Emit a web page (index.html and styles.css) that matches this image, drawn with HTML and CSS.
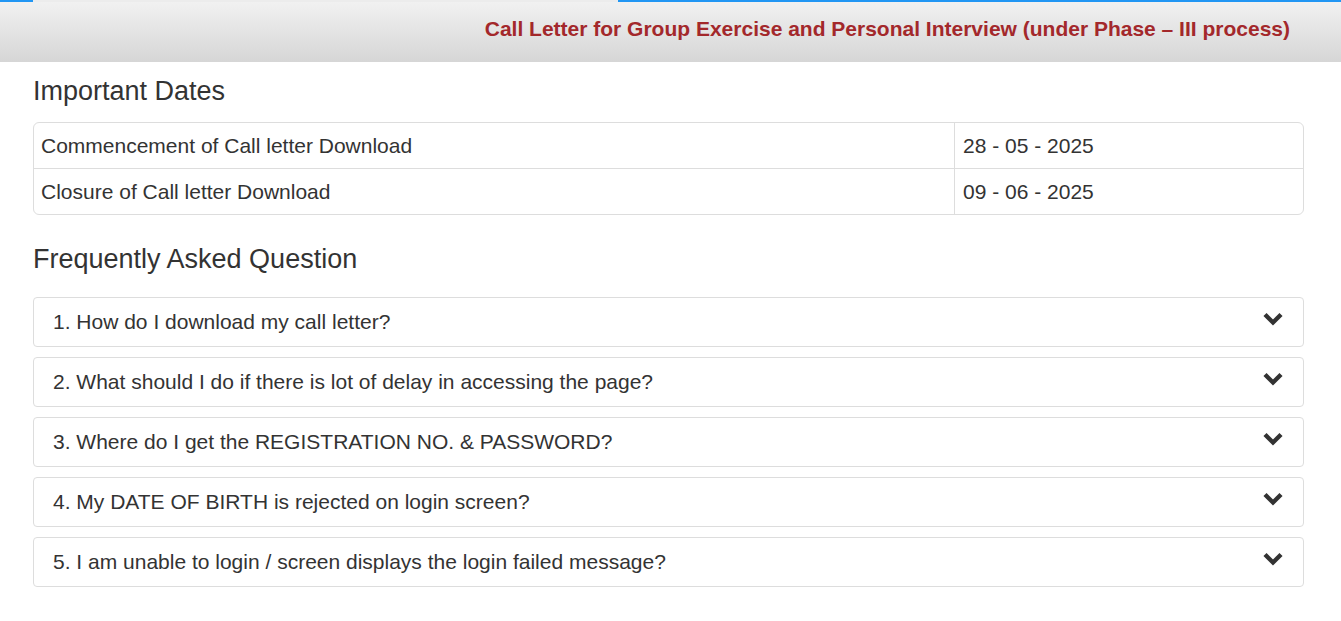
FILE: index.html
```html
<!DOCTYPE html>
<html>
<head>
<meta charset="utf-8">
<title>Call Letter</title>
<link rel="stylesheet" href="styles.css">
</head>
<body>
<div class="topline"><span class="seg-a"></span><span class="seg-b"></span><span class="seg-c"></span></div>
<header class="banner">
  <h1 class="banner-title">Call Letter for Group Exercise and Personal Interview (under Phase – III process)</h1>
</header>
<main class="content">
  <h2 class="section-title first">Important Dates</h2>
  <table class="dates">
    <tr><td class="label">Commencement of Call letter Download</td><td class="date">28 - 05 - 2025</td></tr>
    <tr><td class="label">Closure of Call letter Download</td><td class="date">09 - 06 - 2025</td></tr>
  </table>
  <h2 class="section-title second">Frequently Asked Question</h2>
  <div class="faq">
    <div class="faq-item"><span class="q">1. How do I download my call letter?</span><svg class="chev" viewBox="0 0 20 14" width="20" height="14"><path d="M2 2.5 L10 10.5 L18 2.5"/></svg></div>
    <div class="faq-item"><span class="q">2. What should I do if there is lot of delay in accessing the page?</span><svg class="chev" viewBox="0 0 20 14" width="20" height="14"><path d="M2 2.5 L10 10.5 L18 2.5"/></svg></div>
    <div class="faq-item"><span class="q">3. Where do I get the REGISTRATION NO. &amp; PASSWORD?</span><svg class="chev" viewBox="0 0 20 14" width="20" height="14"><path d="M2 2.5 L10 10.5 L18 2.5"/></svg></div>
    <div class="faq-item"><span class="q">4. My DATE OF BIRTH is rejected on login screen?</span><svg class="chev" viewBox="0 0 20 14" width="20" height="14"><path d="M2 2.5 L10 10.5 L18 2.5"/></svg></div>
    <div class="faq-item"><span class="q">5. I am unable to login / screen displays the login failed message?</span><svg class="chev" viewBox="0 0 20 14" width="20" height="14"><path d="M2 2.5 L10 10.5 L18 2.5"/></svg></div>
  </div>
</main>
</body>
</html>
```
FILE: styles.css
```css
html, body {
  margin: 0;
  padding: 0;
  background: #fff;
  font-family: "Liberation Sans", Arial, sans-serif;
  color: #333;
}
.topline {
  display: flex;
  height: 2px;
}
.seg-a { width: 33px; background: #2196f3; }
.seg-b { width: 585px; background: #ececec; }
.seg-c { flex: 1; background: #2196f3; }
.banner {
  height: 60px;
  background: linear-gradient(to bottom, #f1f1f1 0%, #d6d6d6 100%);
  display: flex;
  align-items: center;
  justify-content: flex-end;
  padding-right: 51px;
}
.banner-title {
  margin: 0 0 6px 0;
  font-size: 21px;
  font-weight: bold;
  color: #a3282b;
}
.content {
  padding: 0 37px 0 33px;
}
.section-title {
  font-size: 27px;
  font-weight: normal;
  line-height: 30px;
  color: #333;
  margin: 0;
}
.section-title.first { margin: 14px 0 16px; }
.section-title.second { margin: 29px 0 23px; }
.dates {
  width: 100%;
  border-collapse: separate;
  border-spacing: 0;
  border: 1px solid #ddd;
  border-radius: 6px;
  font-size: 21px;
}
.dates td {
  height: 45px;
  padding: 0 8px;
  vertical-align: middle;
}
.dates tr + tr td { border-top: 1px solid #ddd; }
.dates td.label { width: 72.5%; padding-left: 7px; }
.dates td.date { border-left: 1px solid #ddd; }
.faq {
  display: flex;
  flex-direction: column;
  gap: 10px;
}
.faq-item {
  height: 48px;
  border: 1px solid #ddd;
  border-radius: 4px;
  display: flex;
  align-items: center;
  justify-content: space-between;
  padding: 0 20px 0 19px;
  font-size: 21px;
}
.chev {
  margin-top: -6px;
  fill: none;
  stroke: #333;
  stroke-width: 4.4;
  stroke-linecap: butt;
  stroke-linejoin: miter;
}
```
